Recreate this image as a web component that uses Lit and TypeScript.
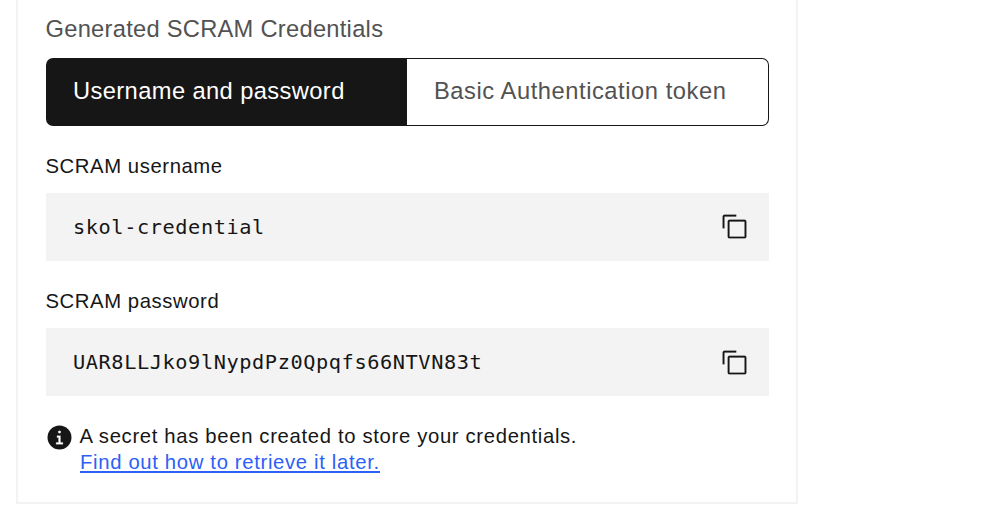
import { LitElement, html, css } from "lit";
import { customElement, property } from "lit/decorators.js";

const sans = css`"Liberation Sans", Arial, sans-serif`;

@customElement("copy-field")
class CopyField extends LitElement {
  @property() label = "";
  @property() value = "";

  static styles = css`
    :host { display: block; height: 108px; margin-bottom: 27px; font-family: ${sans}; color: #161616; }
    .label { height: 27px; line-height: 27px; margin: 0 0 13px -0.5px; font-size: 20.3px; letter-spacing: 0.58px; white-space: nowrap; }
    .box { height: 68px; box-sizing: border-box; padding: 0 21px 0 27px; background: #f3f3f3; display: flex; align-items: center; justify-content: space-between; }
    .value { font-family: "DejaVu Sans Mono", monospace; font-size: 20.3px; line-height: 27px; letter-spacing: 0.58px; white-space: nowrap; }
    .copy { display: block; width: 27px; height: 27px; margin-bottom: var(--copy-lift, 1px); fill: #161616; stroke: #161616; stroke-width: 0.25; }
  `;

  render() {
    return html`
      <div class="label">${this.label}</div>
      <div class="box">
        <div class="value">${this.value}</div>
        <svg class="copy" viewBox="0 0 32 32">
          <path d="M28,10V28H10V10H28m0-2H10a2,2,0,0,0-2,2V28a2,2,0,0,0,2,2H28a2,2,0,0,0,2-2V10a2,2,0,0,0-2-2Z"></path>
          <path d="M4,18H2V4A2,2,0,0,1,4,2H18V4H4Z"></path>
        </svg>
      </div>
    `;
  }
}

@customElement("app-root")
class AppRoot extends LitElement {
  static styles = css`
    :host { display: block; height: 532px; overflow: hidden; background: #fff; font-family: ${sans}; color: #161616; }
    .card { width: 782px; height: 504px; box-sizing: border-box; margin-left: 16px; padding: 14px 27px 0 28px; border: 2px solid #f3f3f3; border-top: 0; }
    .heading { height: 30px; line-height: 30px; margin: 0 0 14px -0.5px; font-size: 23.7px; letter-spacing: 0.27px; color: #525252; white-space: nowrap; }
    .tabs { display: flex; height: 68px; margin-bottom: 27px; }
    .tab { flex: 1; box-sizing: border-box; padding-left: 27px; border: 1px solid #161616; border-left: 0; border-radius: 0 7px 7px 0; line-height: 65px; font-size: 23.7px; letter-spacing: 0.56px; color: #525252; white-space: nowrap; }
    .tab.selected { flex: 0 0 361px; border: 0; padding: 1px 0 0 27px; border-radius: 7px 0 0 7px; letter-spacing: 0.4px; background: #161616; color: #fff; }
    .password { --copy-lift: 0px; }
    .note { display: flex; font-size: 20.3px; letter-spacing: 0.66px; line-height: 26px; white-space: nowrap; }
    .info { flex: none; width: 27px; height: 27px; margin: 1px 7px 0 0; }
    .disc { fill: #161616; }
    .glyph { fill: #fff; stroke: #fff; stroke-width: 0.3; }
    .message { margin-left: -0.5px; }
    .link { display: inline-block; height: 22px; line-height: 26px; color: #2c60f6; border-bottom: 2px solid #2c60f6; text-decoration: none; }
  `;

  render() {
    return html`
      <div class="card">
        <div class="heading">Generated SCRAM Credentials</div>
        <div class="tabs">
          <div class="tab selected">Username and password</div>
          <div class="tab">Basic Authentication token</div>
        </div>
        <copy-field label="SCRAM username" value="skol-credential"></copy-field>
        <copy-field class="password" label="SCRAM password" value="UAR8LLJko9lNypdPz0Qpqfs66NTVN83t"></copy-field>
        <div class="note">
          <svg class="info" viewBox="0 0 32 32">
            <circle class="disc" cx="16" cy="16" r="14.2"></circle>
            <path class="glyph" d="M16,8a1.5,1.5,0,1,1-1.5,1.5A1.5,1.5,0,0,1,16,8Zm4,16.125H12v-2.25h2.875v-5.75H13v-2.25h4.125v8H20Z"></path>
          </svg>
          <div>
            <div class="message">A secret has been created to store your credentials.</div>
            <a class="link">Find out how to retrieve it later.</a>
          </div>
        </div>
      </div>
    `;
  }
}
